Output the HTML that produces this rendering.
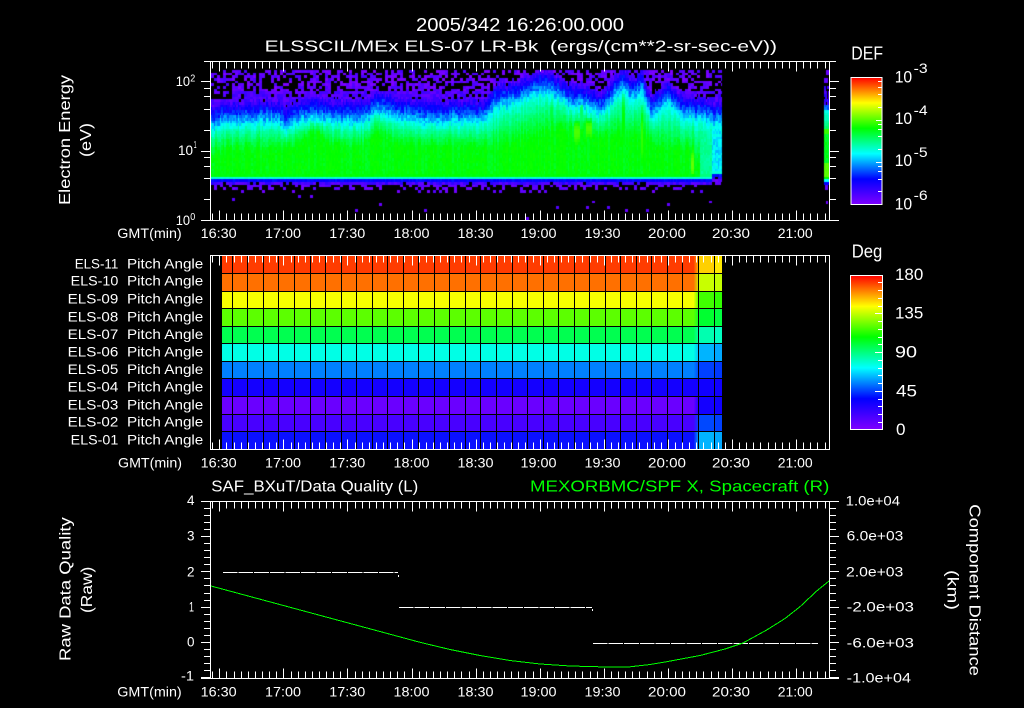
<!DOCTYPE html>
<html>
<head>
<meta charset="utf-8">
<style>
html,body{margin:0;padding:0;background:#000;width:1024px;height:708px;overflow:hidden}
#c{position:absolute;left:211px;top:62px;background:linear-gradient(180deg,#000 0%,#3000ff 25%,#00ffff 37%,#00ff60 55%,#00ff00 70%,#00ffff 73%,#0000ff 75%,#000 80%) no-repeat 0 0/511px 158px}
svg{position:absolute;left:0;top:0}
text{font-family:"Liberation Sans",sans-serif;fill:#fff;white-space:pre}
.s{font-size:14px}
.m{font-size:16px}
.b{font-size:18px}
.l{font-size:17px}
.g{fill:#00ff00}
</style>
</head>
<body>
<canvas id="c" width="618" height="158"></canvas>
<svg width="1024" height="708" xmlns="http://www.w3.org/2000/svg">
<defs>
<linearGradient id="rb" x1="0" y1="0" x2="0" y2="1">
<stop offset="0" stop-color="#ff0000"/><stop offset=".2" stop-color="#ffff00"/><stop offset=".4" stop-color="#00ff00"/><stop offset=".6" stop-color="#00ffff"/><stop offset=".8" stop-color="#0000ff"/><stop offset="1" stop-color="#7f00ff"/>
</linearGradient>
</defs>
<g id="heat" shape-rendering="crispEdges"></g>
<rect x="851" y="77.5" width="31" height="127" fill="url(#rb)" stroke="#fff" stroke-width="1" shape-rendering="crispEdges"/>
<rect x="850.5" y="275.5" width="32" height="154" fill="url(#rb)" stroke="#fff" stroke-width="1" shape-rendering="crispEdges"/>
<path id="t" fill="none" stroke="#fff" stroke-width="1" shape-rendering="crispEdges"/>

<path fill="none" stroke="#fff" stroke-width="1" stroke-dasharray="14.6 1" shape-rendering="crispEdges" d="M223 572.5H398M399 607.5H592M593 643.5H818"/>
<rect x="398" y="575" width="1" height="2" fill="#fff"/>
<rect x="592" y="609" width="1" height="2" fill="#fff"/>
<polyline fill="none" stroke="#00ff00" stroke-width="1" shape-rendering="crispEdges" points="211,586 420,642.3 450,649.5 480,655.5 510,660.5 540,664 570,666 600,666.8 630,666.8 650,664.5 666.7,661.7 700,655.5 725,649 743,643 766.7,630 785,618.5 800,606.7 816.7,591 829,581"/>

<text class="b" x="416" y="31" textLength="208" lengthAdjust="spacingAndGlyphs">2005/342 16:26:00.000</text>
<text class="m" x="264.7" y="51.7" textLength="512.3" lengthAdjust="spacingAndGlyphs">ELSSCIL/MEx ELS-07 LR-Bk  (ergs/(cm**2-sr-sec-eV))</text>

<text class="m" transform="translate(70,205) rotate(-90)" textLength="130" lengthAdjust="spacingAndGlyphs">Electron Energy</text>
<text class="m" transform="translate(91,157) rotate(-90)" textLength="34" lengthAdjust="spacingAndGlyphs">(eV)</text>

<text class="s" x="175.7" y="86" textLength="14.3" lengthAdjust="spacingAndGlyphs">10</text><text font-size="10" x="190.2" y="81.5" textLength="5" lengthAdjust="spacingAndGlyphs">2</text>
<text class="s" x="178" y="155" textLength="15" lengthAdjust="spacingAndGlyphs">10</text><text font-size="10" x="193.6" y="148" textLength="3" lengthAdjust="spacingAndGlyphs">1</text>
<text class="s" x="175.7" y="225" textLength="14.3" lengthAdjust="spacingAndGlyphs">10</text><text font-size="10" x="190.2" y="220" textLength="5" lengthAdjust="spacingAndGlyphs">0</text>

<g class="s">
<text class="s" x="117.3" y="238" textLength="64.4" lengthAdjust="spacingAndGlyphs">GMT(min)</text>
<text class="s" x="200.7" y="238" textLength="36" lengthAdjust="spacingAndGlyphs">16:30</text>
<text class="s" x="265" y="238" textLength="36" lengthAdjust="spacingAndGlyphs">17:00</text>
<text class="s" x="329.3" y="238" textLength="36" lengthAdjust="spacingAndGlyphs">17:30</text>
<text class="s" x="393.5" y="238" textLength="36" lengthAdjust="spacingAndGlyphs">18:00</text>
<text class="s" x="457.5" y="238" textLength="36" lengthAdjust="spacingAndGlyphs">18:30</text>
<text class="s" x="520.5" y="238" textLength="36" lengthAdjust="spacingAndGlyphs">19:00</text>
<text class="s" x="584.5" y="238" textLength="36" lengthAdjust="spacingAndGlyphs">19:30</text>
<text class="s" x="648" y="238" textLength="38" lengthAdjust="spacingAndGlyphs">20:00</text>
<text class="s" x="712" y="238" textLength="38" lengthAdjust="spacingAndGlyphs">20:30</text>
<text class="s" x="777.7" y="238" textLength="35" lengthAdjust="spacingAndGlyphs">21:00</text>
</g>

<text class="b" x="851.3" y="59.3" textLength="31.7" lengthAdjust="spacingAndGlyphs">DEF</text>
<text class="l" x="894.7" y="82.3" textLength="17.5" lengthAdjust="spacingAndGlyphs">10</text><text class="s" x="913.7" y="73" textLength="14" lengthAdjust="spacingAndGlyphs">-3</text>
<text class="l" x="894.7" y="124" textLength="17.5" lengthAdjust="spacingAndGlyphs">10</text><text class="s" x="913.7" y="115" textLength="14" lengthAdjust="spacingAndGlyphs">-4</text>
<text class="l" x="894.7" y="166" textLength="17.5" lengthAdjust="spacingAndGlyphs">10</text><text class="s" x="913.7" y="157" textLength="14" lengthAdjust="spacingAndGlyphs">-5</text>
<text class="l" x="894.7" y="209.3" textLength="17.5" lengthAdjust="spacingAndGlyphs">10</text><text class="s" x="913.7" y="200" textLength="14" lengthAdjust="spacingAndGlyphs">-6</text>

<text class="s" x="74.7" y="268.3" textLength="43.6" lengthAdjust="spacingAndGlyphs">ELS-11</text><text class="s" x="127" y="268.3" textLength="76.3" lengthAdjust="spacingAndGlyphs">Pitch Angle</text>
<text class="s" x="70.7" y="285.7" textLength="47.6" lengthAdjust="spacingAndGlyphs">ELS-10</text><text class="s" x="127" y="285.7" textLength="76.3" lengthAdjust="spacingAndGlyphs">Pitch Angle</text>
<text class="s" x="67.7" y="303.3" textLength="50.6" lengthAdjust="spacingAndGlyphs">ELS-09</text><text class="s" x="127" y="303.3" textLength="76.3" lengthAdjust="spacingAndGlyphs">Pitch Angle</text>
<text class="s" x="67.7" y="321.7" textLength="50.6" lengthAdjust="spacingAndGlyphs">ELS-08</text><text class="s" x="127" y="321.7" textLength="76.3" lengthAdjust="spacingAndGlyphs">Pitch Angle</text>
<text class="s" x="67.7" y="339" textLength="50.6" lengthAdjust="spacingAndGlyphs">ELS-07</text><text class="s" x="127" y="339" textLength="76.3" lengthAdjust="spacingAndGlyphs">Pitch Angle</text>
<text class="s" x="67.7" y="356.7" textLength="50.6" lengthAdjust="spacingAndGlyphs">ELS-06</text><text class="s" x="127" y="356.7" textLength="76.3" lengthAdjust="spacingAndGlyphs">Pitch Angle</text>
<text class="s" x="67.7" y="374" textLength="50.6" lengthAdjust="spacingAndGlyphs">ELS-05</text><text class="s" x="127" y="374" textLength="76.3" lengthAdjust="spacingAndGlyphs">Pitch Angle</text>
<text class="s" x="67.7" y="391.7" textLength="50.6" lengthAdjust="spacingAndGlyphs">ELS-04</text><text class="s" x="127" y="391.7" textLength="76.3" lengthAdjust="spacingAndGlyphs">Pitch Angle</text>
<text class="s" x="67.7" y="409.3" textLength="50.6" lengthAdjust="spacingAndGlyphs">ELS-03</text><text class="s" x="127" y="409.3" textLength="76.3" lengthAdjust="spacingAndGlyphs">Pitch Angle</text>
<text class="s" x="67.7" y="426.7" textLength="50.6" lengthAdjust="spacingAndGlyphs">ELS-02</text><text class="s" x="127" y="426.7" textLength="76.3" lengthAdjust="spacingAndGlyphs">Pitch Angle</text>
<text class="s" x="70.7" y="444.3" textLength="47.6" lengthAdjust="spacingAndGlyphs">ELS-01</text><text class="s" x="127" y="444.3" textLength="76.3" lengthAdjust="spacingAndGlyphs">Pitch Angle</text>

<text class="s" x="118" y="467.3" textLength="64" lengthAdjust="spacingAndGlyphs">GMT(min)</text>
<text class="s" x="200.7" y="467.3" textLength="36" lengthAdjust="spacingAndGlyphs">16:30</text>
<text class="s" x="265" y="467.3" textLength="36" lengthAdjust="spacingAndGlyphs">17:00</text>
<text class="s" x="329.3" y="467.3" textLength="36" lengthAdjust="spacingAndGlyphs">17:30</text>
<text class="s" x="393.5" y="467.3" textLength="36" lengthAdjust="spacingAndGlyphs">18:00</text>
<text class="s" x="457.5" y="467.3" textLength="36" lengthAdjust="spacingAndGlyphs">18:30</text>
<text class="s" x="520.5" y="467.3" textLength="36" lengthAdjust="spacingAndGlyphs">19:00</text>
<text class="s" x="584.5" y="467.3" textLength="36" lengthAdjust="spacingAndGlyphs">19:30</text>
<text class="s" x="648" y="467.3" textLength="38" lengthAdjust="spacingAndGlyphs">20:00</text>
<text class="s" x="712" y="467.3" textLength="38" lengthAdjust="spacingAndGlyphs">20:30</text>
<text class="s" x="777.7" y="467.3" textLength="35" lengthAdjust="spacingAndGlyphs">21:00</text>

<text class="b" x="851.7" y="257.3" textLength="30.6" lengthAdjust="spacingAndGlyphs">Deg</text>
<text class="l" x="895" y="280" textLength="28.3" lengthAdjust="spacingAndGlyphs">180</text>
<text class="l" x="895" y="318.7" textLength="28.3" lengthAdjust="spacingAndGlyphs">135</text>
<text class="l" x="895" y="357.3" textLength="22" lengthAdjust="spacingAndGlyphs">90</text>
<text class="l" x="896" y="396.7" textLength="21" lengthAdjust="spacingAndGlyphs">45</text>
<text class="l" x="896" y="435" textLength="9.5" lengthAdjust="spacingAndGlyphs">0</text>

<text class="m" x="211.3" y="491.7" textLength="207" lengthAdjust="spacingAndGlyphs">SAF_BXuT/Data Quality (L)</text>
<text class="m g" x="530" y="491.7" textLength="299.3" lengthAdjust="spacingAndGlyphs">MEXORBMC/SPF X, Spacecraft (R)</text>

<text class="s" x="187" y="505" textLength="7.5" lengthAdjust="spacingAndGlyphs">4</text>
<text class="s" x="187" y="540.7" textLength="7.5" lengthAdjust="spacingAndGlyphs">3</text>
<text class="s" x="187" y="576.7" textLength="7.5" lengthAdjust="spacingAndGlyphs">2</text>
<text class="s" x="189" y="611.7" textLength="5" lengthAdjust="spacingAndGlyphs">1</text>
<text class="s" x="187" y="646.7" textLength="7.5" lengthAdjust="spacingAndGlyphs">0</text>
<text class="s" x="181" y="680.7" textLength="13" lengthAdjust="spacingAndGlyphs">-1</text>

<text class="s" x="845.7" y="505.7" textLength="54.3" lengthAdjust="spacingAndGlyphs">1.0e+04</text>
<text class="s" x="846.7" y="540.7" textLength="56.6" lengthAdjust="spacingAndGlyphs">6.0e+03</text>
<text class="s" x="846" y="576.7" textLength="57.3" lengthAdjust="spacingAndGlyphs">2.0e+03</text>
<text class="s" x="846.7" y="611.7" textLength="67.3" lengthAdjust="spacingAndGlyphs">-2.0e+03</text>
<text class="s" x="846.7" y="647.3" textLength="67.3" lengthAdjust="spacingAndGlyphs">-6.0e+03</text>
<text class="s" x="846.7" y="682.7" textLength="64.3" lengthAdjust="spacingAndGlyphs">-1.0e+04</text>

<text class="m" transform="translate(70.7,661) rotate(-90)" textLength="143.7" lengthAdjust="spacingAndGlyphs">Raw Data Quality</text>
<text class="m" transform="translate(92,613) rotate(-90)" textLength="46.3" lengthAdjust="spacingAndGlyphs">(Raw)</text>
<text class="m" transform="translate(969.3,504.3) rotate(90)" textLength="171.7" lengthAdjust="spacingAndGlyphs">Component Distance</text>
<text class="m" transform="translate(947.3,570) rotate(90)" textLength="40" lengthAdjust="spacingAndGlyphs">(km)</text>

<text class="s" x="117.3" y="696.7" textLength="64.4" lengthAdjust="spacingAndGlyphs">GMT(min)</text>
<text class="s" x="200.7" y="696.7" textLength="36" lengthAdjust="spacingAndGlyphs">16:30</text>
<text class="s" x="265" y="696.7" textLength="36" lengthAdjust="spacingAndGlyphs">17:00</text>
<text class="s" x="329.3" y="696.7" textLength="36" lengthAdjust="spacingAndGlyphs">17:30</text>
<text class="s" x="393.5" y="696.7" textLength="36" lengthAdjust="spacingAndGlyphs">18:00</text>
<text class="s" x="457.5" y="696.7" textLength="36" lengthAdjust="spacingAndGlyphs">18:30</text>
<text class="s" x="520.5" y="696.7" textLength="36" lengthAdjust="spacingAndGlyphs">19:00</text>
<text class="s" x="584.5" y="696.7" textLength="36" lengthAdjust="spacingAndGlyphs">19:30</text>
<text class="s" x="648" y="696.7" textLength="38" lengthAdjust="spacingAndGlyphs">20:00</text>
<text class="s" x="712" y="696.7" textLength="38" lengthAdjust="spacingAndGlyphs">20:30</text>
<text class="s" x="777.7" y="696.7" textLength="35" lengthAdjust="spacingAndGlyphs">21:00</text>
</svg>
<script>
(function(){
var d='';
function L(a,b,c,e){d+='M'+a+' '+b+'L'+c+' '+e;}
var X0=210.5,X1=829.5;
function xticks(top,bot){
  for(var k=-1;k<86;k++){
    var x=Math.round(219.3+7.12*k)+.5;
    if(x<=211||x>=829)continue;
    var len=(k%9===0)?10:7;
    L(x,top,x,top+len);
    L(x,bot,x,bot-len);
  }
}
/* panel 1 */
L(204,61.5,836,61.5);L(201,220.5,839,220.5);L(X0,61,X0,221);L(X1,61,X1,221);
xticks(61.5,220.5);
var dec=69.5;
[[1,1],[1,2],[1,4],[1,6],[1,8],[10,1],[10,2],[10,4],[10,6],[10,8],[100,1]].forEach(function(m){
  var v=m[0]*m[1],y=Math.round(220-dec*Math.log10(v))+.5,maj=(m[1]===1);
  L(maj?201:204,y,X0,y);L(X1,y,maj?839:836,y);
});
/* panel 2 */
L(X0,255.5,X1,255.5);L(X0,449.5,X1,449.5);L(X0,255,X0,450);L(X1,255,X1,450);
xticks(255.5,449.5);
/* panel 3 */
L(201,501.5,839,501.5);L(201,678.5,839,678.5);L(X0,501,X0,679);L(X1,501,X1,679);
xticks(501.5,678.5);
for(var i=0;i<=25;i++){
  var y=Math.round(502+7.04*i)-.5,maj=i%5===0;
  L(maj?201:204,y,X0,y);L(X1,y,maj?839:836,y);
}
/* colour bar ticks */
for(var e=0;e<3;e++){[1,2,4,6,8].forEach(function(m){
  var y=Math.round(204-42.2*(e+Math.log10(m)))+.5;
  if(e===0&&m===1)return;
  L(m===1?876:878,y,882,y);
});}
for(i=1;i<20;i++){
  var y2=Math.round(429.5-7.74*i)+.5;
  L(i%5===0?875:878,y2,882,y2);
}
document.getElementById('t').setAttribute('d',d);

/* pitch-angle heatmap */
var E=[256,273,291,308,326,343,361,378,396,414,431,449];
var A=['#ff3c00','#ff7000','#f8ff00','#5cff00','#00ff50','#00ffe6','#0080ff','#1400ff','#6a00ff','#4800ff','#0a10ff'];
var B=['#ffd000','#c8ff00','#40ff00','#00ff30','#00ffb0','#00b4ff','#0040ff','#1000ff','#1400ff','#0048ff','#00b4ff'];
var C=['#ffe800','#c4ff00','#30ff00','#00ff40','#00ffc0','#00a8ff','#0038ff','#1000ff','#1000ff','#0040ff','#00a8ff'];
function hx(s){return[parseInt(s.substr(1,2),16),parseInt(s.substr(3,2),16),parseInt(s.substr(5,2),16)];}
function mix(a,b,f){var p=hx(a),q=hx(b);return'rgb('+[0,1,2].map(function(i){return Math.round(p[i]+(q[i]-p[i])*f);}).join(',')+')';}
var h='';
function R(x,y,w,hh,c){h+='<rect x="'+x+'" y="'+y+'" width="'+w+'" height="'+hh+'" fill="'+c+'"/>';}
for(var r=0;r<11;r++){
  var y0=E[r],hh=E[r+1]-y0;
  R(222,y0,472,hh,A[r]);
  for(var s=0;s<5;s++)R(694+s,y0,1,hh,mix(A[r],B[r],(s+1)/6));
  R(699,y0,16,hh,B[r]);
  R(715,y0,7,hh,C[r]);
}
for(r=1;r<11;r++)R(222,E[r],500,1,'#000');
for(var k=0;k<32;k++)R(Math.round(232.3+15.54*k-.5),256,1,193,'#000');
document.getElementById('heat').innerHTML=h;

/* spectrogram */
var cv=document.getElementById('c'),g=cv.getContext('2d');
cv.style.background='none';
var seed=12345;
function rnd(){seed=(seed*1664525+1013904223)>>>0;return seed/4294967296;}
var st=[[0,127,0,255],[.2,0,0,255],[.4,0,255,255],[.6,0,255,0],[.8,255,255,0],[1,255,0,0]];
function cm(t){
  t=Math.max(0,Math.min(1,t));
  for(var i=0;i<5;i++){if(t<=st[i+1][0]){var a=st[i],b=st[i+1],f=(t-a[0])/.2;
    return'rgb('+Math.round(a[1]+(b[1]-a[1])*f)+','+Math.round(a[2]+(b[2]-a[2])*f)+','+Math.round(a[3]+(b[3]-a[3])*f)+')';}}
  return'#f00';
}
function pl(p,x){
  if(x<=p[0][0])return p[0][1];
  for(var i=1;i<p.length;i++){if(x<=p[i][0]){var f=(x-p[i-1][0])/(p[i][0]-p[i-1][0]);return p[i-1][1]+(p[i][1]-p[i-1][1])*f;}}
  return p[p.length-1][1];
}
var TOP=[[211,128],[225,124],[260,122],[275,121],[285,130],[295,123],[316,118],[330,123],[365,121],[375,114],[385,115],[400,120],[420,122],[470,122],[486,122],[492,110],[510,104],[530,98],[545,92],[560,100],[572,108],[585,106],[600,115],[612,100],[622,92],[632,100],[641,92],[650,116],[658,112],[666,103],[680,116],[690,118],[700,120],[722,126]];
var GRN=[[211,156],[225,150],[290,148],[300,140],[315,130],[330,146],[360,146],[375,134],[385,136],[400,146],[470,146],[490,150],[520,145],[545,135],[570,128],[585,128],[600,140],[625,135],[640,135],[660,150],[690,150],[700,168],[722,190]];
var ST=[[365,366,108,135,.45],[378,379,108,130,.5],[580,581,95,125,.52],[573,578,118,144,.66],[585,590,116,138,.66],[622,623,88,150,.6],[641,642,100,170,.64],[691,692,148,178,.68],[550,551,100,125,.55]];
var H=2.67,ox=211,oy=62;
var blk={};
function chunk(x,y){
  /* coarse noise cells, about 3 px wide, so the sparse speckle looks blocky */
  var k=Math.floor(x/3)+'_'+Math.round((y-70)/H);
  if(!blk[k])blk[k]=[rnd(),rnd()];
  return blk[k];
}
function cell(x,y,w,c){g.fillStyle=c;var a=Math.round(y),b=Math.round(y+H);g.fillRect(x-ox,a-oy,w,b-a);}
for(var ci=0;;ci++){
  var x=211+Math.floor(ci*1.5),W=211+Math.floor((ci+1)*1.5)-x;
  if(x>=722)break;
  var yt=pl(TOP,x)+(rnd()-.5)*5, yg=pl(GRN,x)+(rnd()-.5)*6, cn=(rnd()-.5)*.05;
  var yb=x<712?177:172;
  var lim=x>=712?.43:(x>=700?.5:1);
  for(var y=70;y<220;y+=H){
    var t=-1,b=yt-24,ch;
    if(y<b){
      var p=y<90?.56:.85;
      if(x<232&&y>78&&y<98)p=.4;
      if(x>700)p-=.1;
      ch=chunk(x,y);
      if(ch[0]<p)t=ch[1]*.09+(y>90?.03:0);
    }else if(y<yt){
      t=.08+.32*(y-b)/24+(rnd()-.5)*.1;
    }else if(y<yb-3){
      var f=Math.min(1,(y-yt)/Math.max(6,yg-yt));
      t=.4+.2*Math.pow(f,.8)+cn+(rnd()-.5)*.035;
      if(t>.61)t=.61-rnd()*.01;
      if(t>lim)t=lim-rnd()*(x>=712?.09:.04);
      for(var q=0;q<ST.length;q++){var o=ST[q];if(x>=o[0]&&x<=o[1]&&y>=o[2]&&y<=o[3]){
        var nt=t+(o[4]-t)*Math.sin(Math.PI*(y-o[2])/(o[3]-o[2]));if(nt>t)t=nt;}}
    }else if(y<yb){
      t=.6-(y-yb+3)/3*.18+(rnd()-.5)*.02;
      if(t>lim)t=lim;
    }else if(y<yb+3){
      t=.3-(y-yb)/3*.12+(rnd()-.5)*.04;
    }else if(y<yb+7){
      ch=chunk(x,y);
      if(ch[0]<.9)t=.04+ch[1]*.1;
    }else{
      var pp=y<yb+15?.5-(y-yb-7)*.055:.012;
      ch=chunk(x,y);
      if(ch[0]<pp)t=.02+ch[1]*.05;
    }
    if(t>=0)cell(x,y,W,cm(t));
  }
}
/* right strip */
for(x=824;x<829;x++){
  for(y=70;y<190;y+=H){
    var t2=-1;
    if(y<75){if(x>=826)t2=.04;}
    else if(y<78){}
    else if(y<82){if(x<828)t2=.05;}
    else if(y<85){}
    else if(y<104){if(rnd()<.8)t2=.04+rnd()*.12;}
    else if(y<110)t2=.3+(rnd()-.5)*.1;
    else if(y<127)t2=.41+.11*(y-110)/17+(rnd()-.5)*.03;
    else if(y<132)t2=.64;
    else if(y<163)t2=.58+(rnd()-.5)*.05;
    else if(y<175)t2=.67+(rnd()-.5)*.03;
    else if(y<178)t2=.6;
    else if(y<181)t2=.4;
    else if(y<183.5)t2=.2;
    else if(y<188){if(x>824&&x<828)t2=.05;}
    if(t2>=0)cell(x,y,1,cm(t2));
  }
}
g.fillStyle='#6a00ff';g.fillRect(826-ox,201-oy,2,3);
})();
</script>
</body>
</html>
